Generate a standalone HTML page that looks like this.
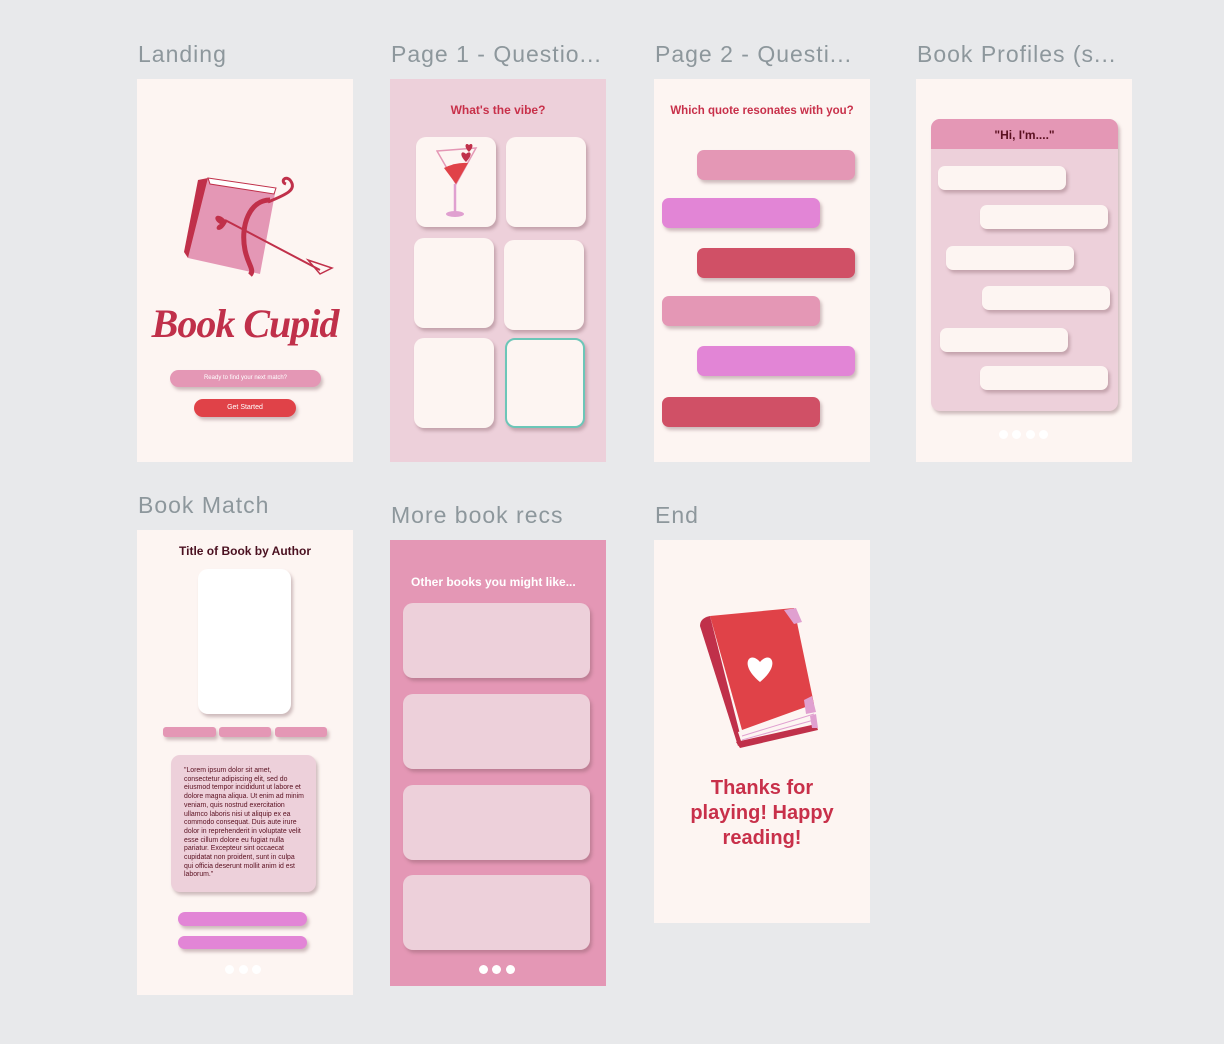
<!DOCTYPE html>
<html><head><style>
*{margin:0;padding:0;box-sizing:border-box}
body{width:1224px;height:1044px;background:#e8e9eb;position:relative;overflow:hidden;font-family:"Liberation Sans",sans-serif}
.a{position:absolute}
.lbl{position:absolute;font-size:23px;color:#8d979c;letter-spacing:1px;white-space:nowrap}
.fr{position:absolute;background:#fdf5f2}
.sh{box-shadow:2px 3px 3px rgba(120,80,90,.35)}
.t{border-radius:10px;background:#fdf5f2}
.bar{position:absolute;border-radius:7px}
.dot{position:absolute;width:9px;height:9px;border-radius:50%;background:#fff}
.h{font-weight:bold;color:#c8304a;text-align:center;position:absolute}
</style></head><body>

<div class="lbl" style="left:138px;top:41px">Landing</div>
<div class="lbl" style="left:391px;top:41px">Page 1 - Questio...</div>
<div class="lbl" style="left:655px;top:41px">Page 2 - Questi...</div>
<div class="lbl" style="left:917px;top:41px">Book Profiles (s...</div>
<div class="lbl" style="left:138px;top:492px">Book Match</div>
<div class="lbl" style="left:391px;top:502px">More book recs</div>
<div class="lbl" style="left:655px;top:502px">End</div>

<!-- Landing -->
<div class="fr" style="left:137px;top:79px;width:216px;height:383px"></div>
<svg class="a" style="left:180px;top:170px" width="160" height="110" viewBox="0 0 160 110">
<path d="M28 8 L96 18 L80 104 L8 88 Z" fill="#e497b5"/>
<path d="M28 8 L18 10 L4 82 L8 88 Z" fill="#c0304a"/>
<path d="M28 8 L96 18 L94 24 L30 14 Z" fill="#fff" stroke="#c0304a" stroke-width="1"/>
<path d="M90 30 C70 30 60 55 65 80 C68 95 75 100 70 105" fill="none" stroke="#c0304a" stroke-width="5"/>
<path d="M88 32 C105 25 118 20 110 10 C105 5 100 12 106 14" fill="none" stroke="#c0304a" stroke-width="3"/>
<path d="M45 50 L140 100" stroke="#c0304a" stroke-width="2"/>
<path d="M128 90 L152 98 L140 104 Z" fill="none" stroke="#c0304a" stroke-width="1.5"/>
<path d="M47 52 C38 40 30 48 40 54 C32 58 40 66 47 52Z" fill="#c0304a"/>
</svg>
<div class="a" style="left:137px;top:300px;width:216px;text-align:center;white-space:nowrap;font-family:'Liberation Serif',serif;font-style:italic;font-weight:bold;font-size:40px;color:#c0304a;letter-spacing:-1px">Book Cupid</div>
<div class="a sh" style="left:170px;top:370px;width:151px;height:17px;border-radius:9px;background:#e497b5;color:#fff;font-size:6px;text-align:center;line-height:17px">Ready to find your next match?</div>
<div class="a sh" style="left:194px;top:399px;width:102px;height:18px;border-radius:9px;background:#e04248;color:#fff;font-size:7px;text-align:center;line-height:18px">Get Started</div>

<!-- Page 1 -->
<div class="fr" style="left:390px;top:79px;width:216px;height:383px;background:#edd0da"></div>
<div class="h" style="left:390px;top:103px;width:216px;font-size:12px">What's the vibe?</div>
<div class="a t sh" style="left:416px;top:137px;width:80px;height:90px"></div>
<svg class="a" style="left:436px;top:140px" width="42" height="80" viewBox="0 0 42 80">
<path d="M1 11 L40 8 L20 44 Z" fill="#fdf5f2" stroke="#e497b5" stroke-width="1.5"/>
<path d="M8 28 Q20 22 32 23 L20 44 Z" fill="#e04248"/>
<path d="M19 44 L19 72" stroke="#e0a0d0" stroke-width="2.5"/>
<ellipse cx="19" cy="74" rx="9" ry="3" fill="#e0a0d0"/>
<path d="M30 22 C22 14 26 10 30 14 C34 10 38 14 30 22Z" fill="#c0304a"/>
<path d="M33 12 C27 6 30 2 33 5 C36 2 39 6 33 12Z" fill="#c0304a"/>
</svg>
<div class="a t sh" style="left:506px;top:137px;width:80px;height:90px"></div>
<div class="a t sh" style="left:414px;top:238px;width:80px;height:90px"></div>
<div class="a t sh" style="left:504px;top:240px;width:80px;height:90px"></div>
<div class="a t sh" style="left:414px;top:338px;width:80px;height:90px"></div>
<div class="a t sh" style="left:505px;top:338px;width:80px;height:90px;border:2px solid #6cc6b8"></div>

<!-- Page 2 -->
<div class="fr" style="left:654px;top:79px;width:216px;height:383px"></div>
<div class="h" style="left:654px;top:105px;width:216px;font-size:11.5px">Which quote resonates with you?</div>
<div class="bar sh" style="left:697px;top:150px;width:158px;height:30px;background:#e497b5"></div>
<div class="bar sh" style="left:662px;top:198px;width:158px;height:30px;background:#e285d6"></div>
<div class="bar sh" style="left:697px;top:248px;width:158px;height:30px;background:#d05066"></div>
<div class="bar sh" style="left:662px;top:296px;width:158px;height:30px;background:#e497b5"></div>
<div class="bar sh" style="left:697px;top:346px;width:158px;height:30px;background:#e285d6"></div>
<div class="bar sh" style="left:662px;top:397px;width:158px;height:30px;background:#d05066"></div>

<!-- Book Profiles -->
<div class="fr" style="left:916px;top:79px;width:216px;height:383px"></div>
<div class="a sh" style="left:931px;top:119px;width:187px;height:292px;border-radius:9px;background:#edd0da;overflow:hidden">
<div style="height:30px;background:#e497b5;text-align:center;line-height:32px;font-size:12px;font-weight:bold;color:#5a1020">"Hi, I'm...."</div></div>
<div class="bar sh" style="left:938px;top:166px;width:128px;height:24px;background:#fdf5f2"></div>
<div class="bar sh" style="left:980px;top:205px;width:128px;height:24px;background:#fdf5f2"></div>
<div class="bar sh" style="left:946px;top:246px;width:128px;height:24px;background:#fdf5f2"></div>
<div class="bar sh" style="left:982px;top:286px;width:128px;height:24px;background:#fdf5f2"></div>
<div class="bar sh" style="left:940px;top:328px;width:128px;height:24px;background:#fdf5f2"></div>
<div class="bar sh" style="left:980px;top:366px;width:128px;height:24px;background:#fdf5f2"></div>
<div class="dot" style="left:999px;top:430px"></div><div class="dot" style="left:1012px;top:430px"></div><div class="dot" style="left:1026px;top:430px"></div><div class="dot" style="left:1039px;top:430px"></div>

<!-- Book Match -->
<div class="fr" style="left:137px;top:530px;width:216px;height:465px"></div>
<div class="a" style="left:137px;top:544px;width:216px;text-align:center;font-size:12px;font-weight:bold;color:#4a1020">Title of Book by Author</div>
<div class="a sh" style="left:198px;top:569px;width:93px;height:145px;border-radius:10px;background:#fff"></div>
<div class="bar sh" style="left:163px;top:727px;width:53px;height:10px;border-radius:3px;background:#e497b5"></div>
<div class="bar sh" style="left:219px;top:727px;width:52px;height:10px;border-radius:3px;background:#e497b5"></div>
<div class="bar sh" style="left:275px;top:727px;width:52px;height:10px;border-radius:3px;background:#e497b5"></div>
<div class="a sh" style="left:171px;top:755px;width:145px;height:137px;border-radius:9px;background:#edd0da;padding:12px 12px 0 13px;font-size:6.9px;line-height:8.7px;color:#5a1020">"Lorem ipsum dolor sit amet, consectetur adipiscing elit, sed do eiusmod tempor incididunt ut labore et dolore magna aliqua. Ut enim ad minim veniam, quis nostrud exercitation ullamco laboris nisi ut aliquip ex ea commodo consequat. Duis aute irure dolor in reprehenderit in voluptate velit esse cillum dolore eu fugiat nulla pariatur. Excepteur sint occaecat cupidatat non proident, sunt in culpa qui officia deserunt mollit anim id est laborum."</div>
<div class="bar sh" style="left:178px;top:912px;width:129px;height:14px;background:#e285d6"></div>
<div class="bar sh" style="left:178px;top:936px;width:129px;height:13px;background:#e285d6"></div>
<div class="dot" style="left:225px;top:965px"></div><div class="dot" style="left:239px;top:965px"></div><div class="dot" style="left:252px;top:965px"></div>

<!-- More recs -->
<div class="fr" style="left:390px;top:540px;width:216px;height:446px;background:#e497b5"></div>
<div class="a" style="left:411px;top:575px;font-size:12px;font-weight:bold;color:#fff">Other books you might like...</div>
<div class="a sh" style="left:403px;top:603px;width:187px;height:75px;border-radius:10px;background:#edd0da"></div>
<div class="a sh" style="left:403px;top:694px;width:187px;height:75px;border-radius:10px;background:#edd0da"></div>
<div class="a sh" style="left:403px;top:785px;width:187px;height:75px;border-radius:10px;background:#edd0da"></div>
<div class="a sh" style="left:403px;top:875px;width:187px;height:75px;border-radius:10px;background:#edd0da"></div>
<div class="dot" style="left:479px;top:965px"></div><div class="dot" style="left:492px;top:965px"></div><div class="dot" style="left:506px;top:965px"></div>

<!-- End -->
<div class="fr" style="left:654px;top:540px;width:216px;height:383px"></div>
<svg class="a" style="left:698px;top:608px" width="120" height="140" viewBox="0 0 120 140">
<path d="M2 18 Q2 10 12 8 L44 134 L40 138 Z" fill="#c0304a"/>
<path d="M12 8 L96 0 L116 96 L44 122 Z" fill="#e04248"/>
<path d="M40 124 L116 100 L118 118 L44 136 Z" fill="#fdf5f2"/>
<path d="M44 128 L116 106 M44 132 L116 112" stroke="#e0a0d0" stroke-width="1"/>
<path d="M38 134 L118 116 L120 122 L42 140 Z" fill="#c0304a"/>
<path d="M86 2 L98 0 L104 14 L96 16 Z" fill="#e0a0d0"/>
<path d="M106 92 L114 88 L118 104 L108 106 Z" fill="#e0a0d0"/>
<path d="M112 108 L118 106 L120 120 L114 120 Z" fill="#e0a0d0"/>
<path d="M62 74 C40 56 52 42 62 54 C72 42 84 56 62 74Z" fill="#fff"/>
</svg>
<div class="h" style="left:654px;top:776px;width:216px;font-size:20px;line-height:25px">Thanks for<br>playing! Happy<br>reading!</div>
</body></html>
